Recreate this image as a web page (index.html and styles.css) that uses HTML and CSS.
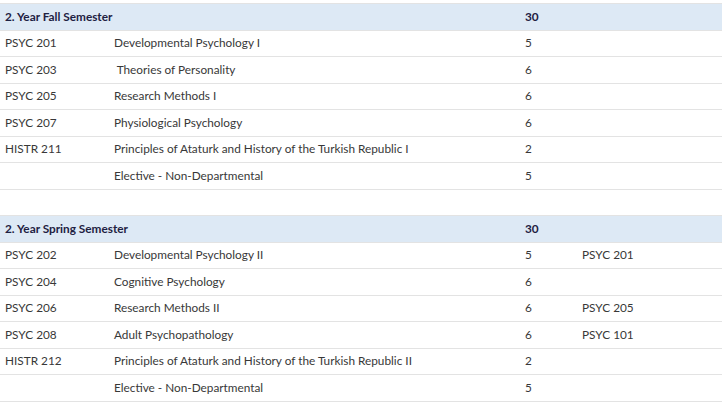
FILE: index.html
```html
<!DOCTYPE html>
<html>
<head>
<meta charset="utf-8">
<link rel="stylesheet" href="styles.css">
</head>
<body>
<table class="curriculum">
  <colgroup>
    <col class="c-code"><col class="c-name"><col class="c-ects"><col class="c-pre">
  </colgroup>
  <tbody>
    <tr class="sem"><td colspan="2">2. Year Fall Semester</td><td>30</td><td></td></tr>
    <tr><td>PSYC 201</td><td>Developmental Psychology I</td><td>5</td><td></td></tr>
    <tr><td>PSYC 203</td><td>&nbsp;Theories of Personality</td><td>6</td><td></td></tr>
    <tr><td>PSYC 205</td><td>Research Methods I</td><td>6</td><td></td></tr>
    <tr><td>PSYC 207</td><td>Physiological Psychology</td><td>6</td><td></td></tr>
    <tr><td>HISTR 211</td><td>Principles of Ataturk and History of the Turkish Republic I</td><td>2</td><td></td></tr>
    <tr><td></td><td>Elective - Non-Departmental</td><td>5</td><td></td></tr>
    <tr class="gap"><td colspan="4"></td></tr>
    <tr class="sem"><td colspan="2">2. Year Spring Semester</td><td>30</td><td></td></tr>
    <tr><td>PSYC 202</td><td>Developmental Psychology II</td><td>5</td><td>PSYC 201</td></tr>
    <tr><td>PSYC 204</td><td>Cognitive Psychology</td><td>6</td><td></td></tr>
    <tr><td>PSYC 206</td><td>Research Methods II</td><td>6</td><td>PSYC 205</td></tr>
    <tr><td>PSYC 208</td><td>Adult Psychopathology</td><td>6</td><td>PSYC 101</td></tr>
    <tr><td>HISTR 212</td><td>Principles of Ataturk and History of the Turkish Republic II</td><td>2</td><td></td></tr>
    <tr><td></td><td>Elective - Non-Departmental</td><td>5</td><td></td></tr>
  </tbody>
</table>
</body>
</html>
```
FILE: styles.css
```css
html, body {
  margin: 0;
  padding: 0;
  background: #ffffff;
}
body {
  padding-top: 3px;
  font-family: Lato, "Open Sans", sans-serif;
  font-size: 11.8px;
  color: #383838;
}
.curriculum {
  width: 722px;
  border-collapse: collapse;
  table-layout: fixed;
}
.c-code { width: 109px; }
.c-name { width: 411px; }
.c-ects { width: 57px; }
.c-pre { width: 145px; }
.curriculum td {
  height: 26.5px;
  box-sizing: border-box;
  padding: 0 5px;
  border-top: 1px solid #e3e3e3;
  white-space: nowrap;
  vertical-align: middle;
  line-height: 16px;
}
.curriculum tr:last-child td {
  border-bottom: 1px solid #e3e3e3;
}
.sem td {
  background: #dde9f5;
  font-weight: 700;
  color: #1e2142;
}
.gap td {
  background: #ffffff;
}
```
